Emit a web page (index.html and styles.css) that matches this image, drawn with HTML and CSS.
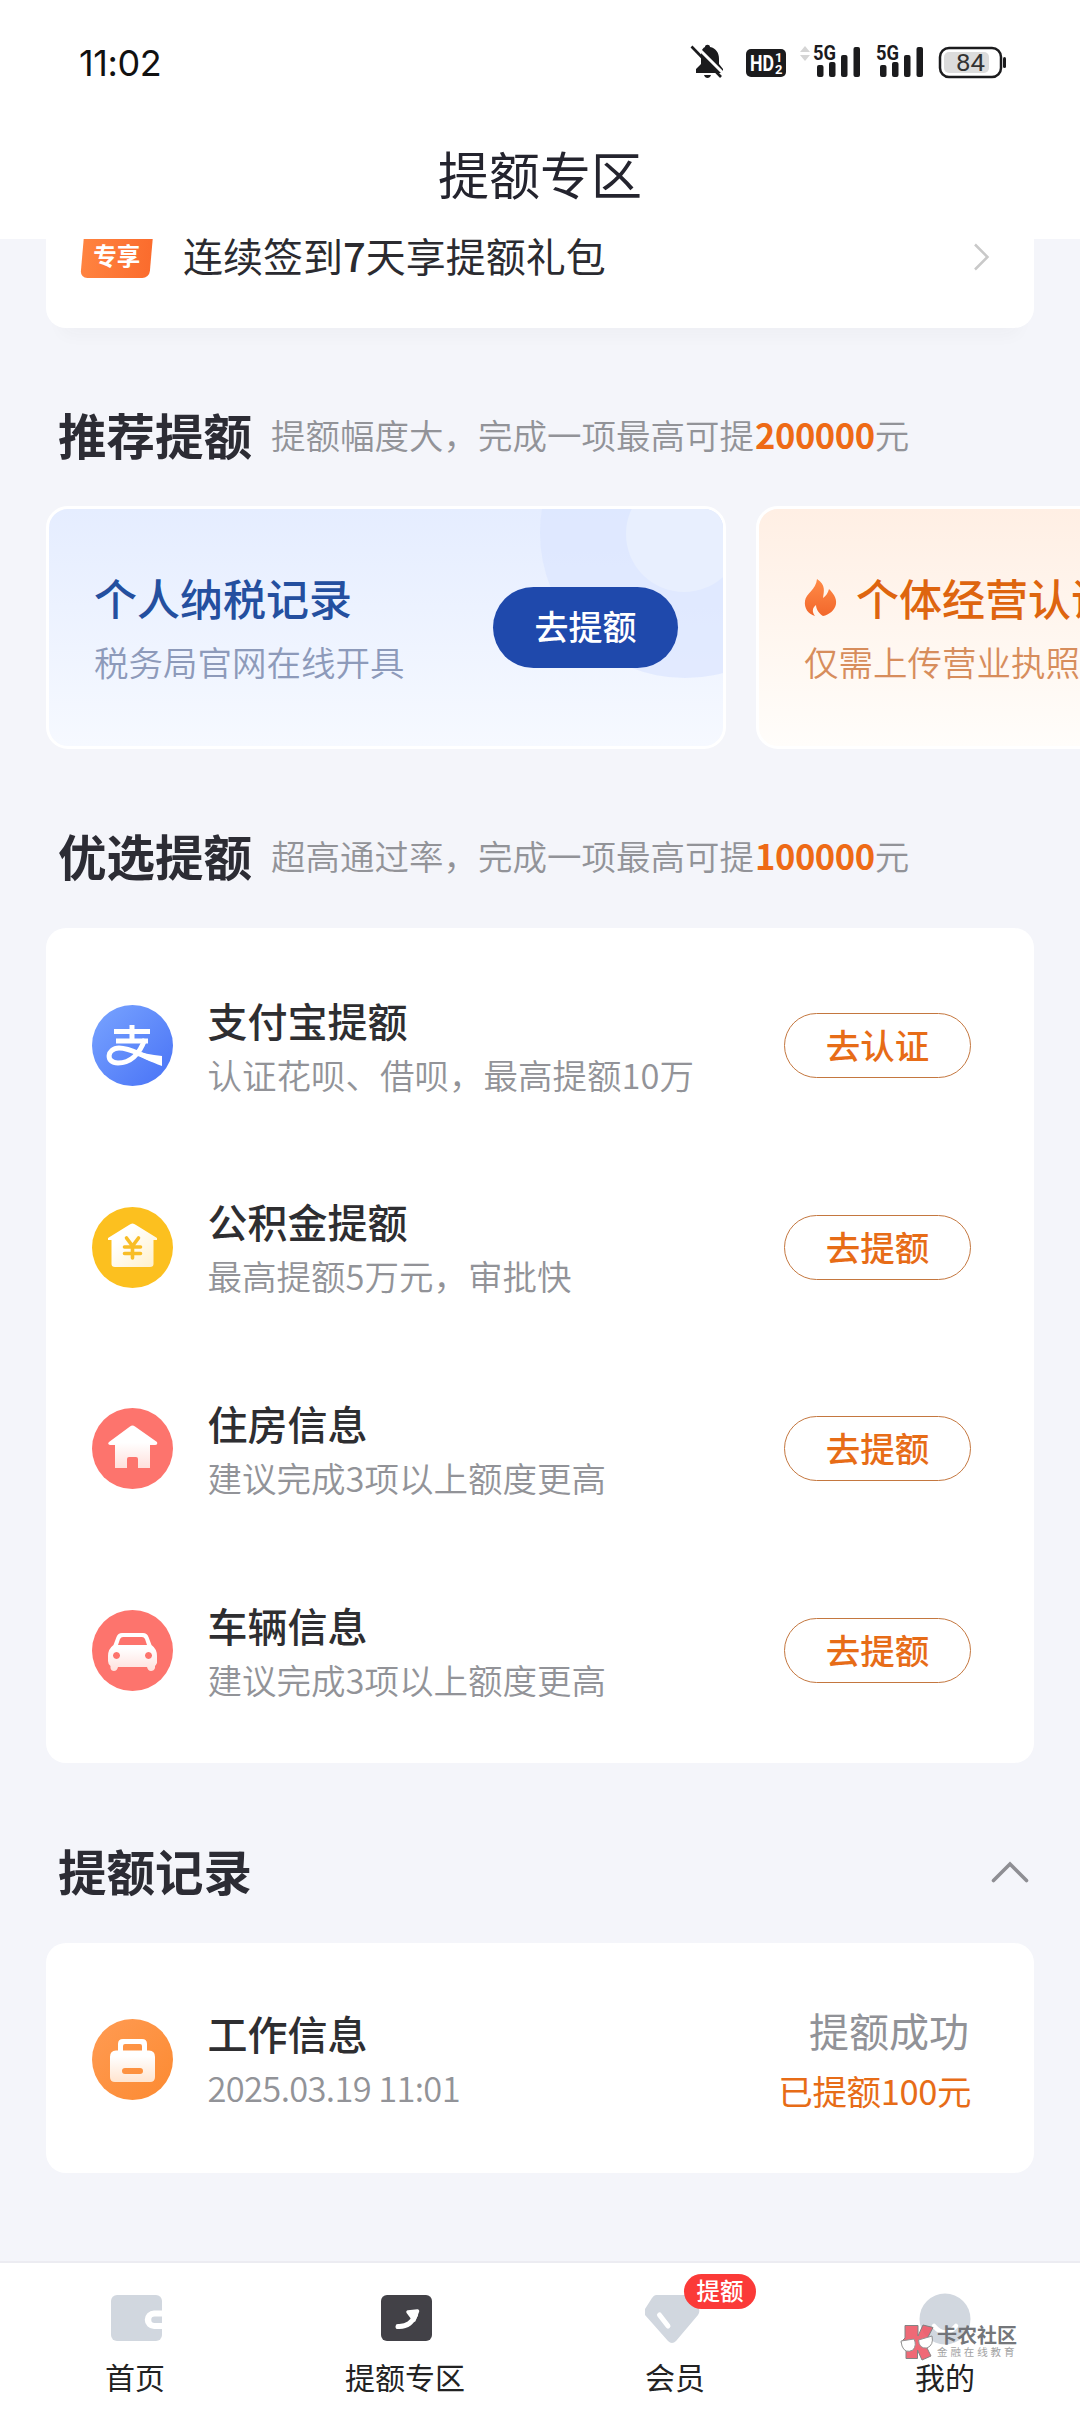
FILE: index.html
```html
<!DOCTYPE html>
<html lang="zh-CN">
<head>
<meta charset="utf-8">
<title>提额专区</title>
<link rel="stylesheet" href="styles.css">
</head>
<body>
<div class="screen">
  <header class="topbar">
    <div class="status">
      <span class="clock">11:02</span>
      <svg class="status-icons" width="330" height="50" viewBox="0 0 330 50">
        <g fill="#1b1b1d">
          <path d="M15 7c0-3 5-3 5 0c6 1 9 6 9 12v5l4 5v4H6v-4l5-5v-5c0-6 0-10 4-12zM14 35h7c-1 4-6 4-7 0z"/>
          <path d="M4 4L34 34" stroke="#fff" stroke-width="3"/><path d="M1.500 6.500L31 37" stroke="#1b1b1d" stroke-width="2.600"/>
          <rect x="56" y="9" width="40" height="28" rx="5"/>
          <rect x="127" y="25" width="6.500" height="12" rx="2"/><rect x="139" y="22" width="6.500" height="15" rx="2"/><rect x="151" y="15" width="6.500" height="22" rx="2"/><rect x="163.500" y="7" width="6.500" height="30" rx="2"/>
          <rect x="190" y="25" width="6.500" height="12" rx="2"/><rect x="202" y="22" width="6.500" height="15" rx="2"/><rect x="214" y="15" width="6.500" height="22" rx="2"/><rect x="226.500" y="7" width="6.500" height="30" rx="2"/>
          <rect x="313" y="17" width="3" height="11" rx="1.500"/>
        </g>
        <path d="M110 12l5-6l5 6zM110 15h10l-5 6z" fill="#d5d5d5"/>
        <rect x="250" y="8" width="61" height="29" rx="9" fill="#fff" stroke="#1b1b1d" stroke-width="2.500"/>
        <rect x="254" y="12" width="45" height="21" rx="5" fill="#dcdcdc"/>
        <g class="st-text">
          <text x="60" y="31" font-size="22" font-weight="700" fill="#fff" textLength="24" lengthAdjust="spacingAndGlyphs">HD</text>
          <text x="85" y="22" font-size="13" font-weight="700" fill="#fff">1</text>
          <text x="85" y="34" font-size="13" font-weight="700" fill="#fff">2</text>
          <text x="123" y="20" font-size="20" font-weight="700" fill="#1b1b1d" stroke="#fff" stroke-width="3" paint-order="stroke" textLength="23" lengthAdjust="spacingAndGlyphs">5G</text>
          <text x="186" y="20" font-size="20" font-weight="700" fill="#1b1b1d" stroke="#fff" stroke-width="3" paint-order="stroke" textLength="23" lengthAdjust="spacingAndGlyphs">5G</text>
          <text x="266" y="31" font-size="24" fill="#333" textLength="29" lengthAdjust="spacingAndGlyphs">84</text>
        </g>
      </svg>
    </div>
    <h1 class="page-title">提额专区</h1>
  </header>

  <main class="content">
    <section class="promo">
      <span class="promo-tag"><span>专享</span></span>
      <span class="promo-text">连续签到<b>7</b>天享提额礼包</span>
      <svg class="promo-arrow" width="20" height="30" viewBox="0 0 20 30"><path d="M3 2.500L15.500 15L3 27.500" fill="none" stroke="#c9c9c9" stroke-width="2.500"/></svg>
    </section>

    <div class="section-head">
      <h2>推荐提额</h2>
      <p>提额幅度大，完成一项最高可提<em>200000</em>元</p>
    </div>

    <div class="offers">
      <article class="offer blue">
        <svg class="offer-deco" width="200" height="180" viewBox="0 0 200 180">
          <circle cx="162" cy="24" r="145" fill="#dce5ff" opacity=".7"/>
          <circle cx="161" cy="25" r="58" fill="#e8effe"/>
        </svg>
        <div class="offer-text"><h3>个人纳税记录</h3><p>税务局官网在线开具</p></div>
        <button class="solid">去提额</button>
      </article>
      <article class="offer orange">
        <div class="offer-text">
          <h3><svg class="flame" width="34" height="40" viewBox="0 0 34 40"><defs><linearGradient id="fl" x1="0" y1="0" x2="0" y2="1"><stop offset="0" stop-color="#ff8b48"/><stop offset="1" stop-color="#f2672b"/></linearGradient></defs><path fill="url(#fl)" d="M13 1C22 7 20 13 19 20C22 18 24 15 25 11C29 15 33 20 32 26C31 32 25 37 19 38C16 36 12 32 12 27C8 30 8 34 11 38C4 36 0 30 1 23C2 15 12 12 13 1z"/></svg>个体经营认证</h3>
          <p>仅需上传营业执照</p>
        </div>
      </article>
    </div>

    <div class="section-head second">
      <h2>优选提额</h2>
      <p>超高通过率，完成一项最高可提<em>100000</em>元</p>
    </div>

    <section class="panel list">
      <div class="row">
        <svg class="row-icon" viewBox="0 0 81 81"><defs><linearGradient id="bl" x1="0" y1="0" x2="1" y2="1"><stop offset="0" stop-color="#79a4ff"/><stop offset="1" stop-color="#4872f6"/></linearGradient></defs><circle cx="40.500" cy="40.500" r="40.500" fill="url(#bl)"/>
          <path d="M22 26.500H58M24 36H56M40 20V36" fill="none" stroke="#fff" stroke-width="5"/><path d="M53 34C49 45 42 58 26 58C13 58 15 43 27 43C41 43 53 54 69 56" fill="none" stroke="#fff" stroke-width="5"/><path d="M42 45C50 48 59 50 70 51V61C59 57 48 52 41 47z" fill="#fff"/></svg>
        <div class="row-text"><h4>支付宝提额</h4><p>认证花呗、借呗，最高提额10万</p></div>
        <button class="ghost">去认证</button>
      </div>
      <div class="row">
        <svg class="row-icon" viewBox="0 0 81 81"><defs><linearGradient id="cr" x1="0" y1="0" x2="1" y2="1"><stop offset=".3" stop-color="#fff"/><stop offset="1" stop-color="#fff0c8"/></linearGradient></defs><circle cx="40.500" cy="40.500" r="40.500" fill="#fcc01f"/>
          <path d="M37 18Q40.500 15 44 18L65 31V33H61.500V57Q61.500 60 58 60H23Q19.500 60 19.500 57V33H16V31z" fill="url(#cr)"/><path d="M34.500 31L40.500 39L46.500 31M32.500 40H48.500M32.500 46.500H48.500M40.500 39V51" fill="none" stroke="#f8bd26" stroke-width="3.600" stroke-linecap="round"/></svg>
        <div class="row-text"><h4>公积金提额</h4><p>最高提额5万元，审批快</p></div>
        <button class="ghost">去提额</button>
      </div>
      <div class="row">
        <svg class="row-icon" viewBox="0 0 81 81"><defs><linearGradient id="pk" x1="0" y1="0" x2="0" y2="1"><stop offset=".4" stop-color="#fff"/><stop offset="1" stop-color="#ffe0dc"/></linearGradient></defs><circle cx="40.500" cy="40.500" r="40.500" fill="#fd746d"/>
          <path d="M38 18.500Q40.500 16.500 43 18.500L65 34Q66 37 63 37H58V60H46V51Q46 49 44 49H37Q35 49 35 51V60H23V37H18Q15 36 17 34z" fill="url(#pk)"/></svg>
        <div class="row-text"><h4>住房信息</h4><p>建议完成3项以上额度更高</p></div>
        <button class="ghost">去提额</button>
      </div>
      <div class="row">
        <svg class="row-icon" viewBox="0 0 81 81"><circle cx="40.500" cy="40.500" r="40.500" fill="#fd746d"/>
          <path fill-rule="evenodd" d="M30 23H51Q55 23 56.500 27L59.500 35Q65 39 65 46V53Q64 55 63 56V58Q62 61 59 61Q56 61 55 57H26Q25 61 22 61Q19 61 18.500 58V56Q16 54 16 51V46Q16 39 21.500 35L24.500 27Q26 23 30 23zM31 27Q29 27 28 29L26 35H55L53 29Q52 27 50 27zM24.500 42a3.500 3.500 0 1 0 .01 0zM56.500 42a3.500 3.500 0 1 0 .01 0z" fill="url(#pk)"/></svg>
        <div class="row-text"><h4>车辆信息</h4><p>建议完成3项以上额度更高</p></div>
        <button class="ghost">去提额</button>
      </div>
    </section>

    <div class="section-head third">
      <h2>提额记录</h2>
      <svg class="collapse" width="40" height="24" viewBox="0 0 40 24"><path d="M3.500 20.500L20 4L36.500 20.500" fill="none" stroke="#8e8e93" stroke-width="3.600" stroke-linecap="round"/></svg>
    </div>

    <section class="panel record">
      <div class="row">
        <svg class="row-icon" viewBox="0 0 81 81"><defs><linearGradient id="or" x1="0" y1="0" x2="1" y2="1"><stop offset="0" stop-color="#ff9b53"/><stop offset="1" stop-color="#fc8a31"/></linearGradient><linearGradient id="bg" x1="0" y1="0" x2="0" y2="1"><stop offset=".4" stop-color="#fff"/><stop offset="1" stop-color="#ffe4cf"/></linearGradient></defs><circle cx="40.500" cy="40.500" r="40.500" fill="url(#or)"/>
          <path fill-rule="evenodd" d="M31 20H50Q55 20 55 25V31.500H57Q63 31.500 63 38V58Q63 63 58 63H23Q18 63 18 58V38Q18 31.500 24 31.500H26V25Q26 20 31 20zM33 25Q31 25 31 27V31.500H50V27Q50 25 48 25zM33 49Q30 49 30 52Q30 55 33 55H48Q51 55 51 52Q51 49 48 49z" fill="url(#bg)"/></svg>
        <div class="row-text"><h4>工作信息</h4><p class="date">2025.03.19 11:01</p></div>
        <div class="result"><span class="ok">提额成功</span><span class="sum">已提额100元</span></div>
      </div>
    </section>
  </main>

  <nav class="tabs">
    <a class="tab"><svg width="60" height="54" viewBox="0 0 60 54"><rect x="6" y="4" width="51" height="46" rx="6" fill="#d1d7df"/><path d="M57 19.500H49a9.200 9.200 0 0 0 0 18.500H57V32H49.500a3 3 0 0 1 0-6.500H57z" fill="#fff"/></svg><span>首页</span></a>
    <a class="tab"><svg width="60" height="54" viewBox="0 0 60 54"><rect x="6" y="4" width="51" height="46" rx="6" fill="#424147"/><path d="M23 35.500C33 36 37 31 40.500 24" fill="none" stroke="#fff" stroke-width="5" stroke-linecap="round"/><path d="M33 21L42.500 20L39 29z" fill="#fff" stroke="#fff" stroke-width="3.500" stroke-linejoin="round"/></svg><span>提额专区</span></a>
    <a class="tab"><svg width="60" height="54" viewBox="3 0 60 54"><path d="M14 4H46Q49 4 51 7L57 18Q58 21 56 24L34 50Q30 54 26 50L3 24Q1 21 3 18L10 7Q12 4 14 4z" fill="#d1d7df"/><path d="M17.500 24L26 35" stroke="#fff" stroke-width="5" stroke-linecap="round"/></svg><i class="badge">提额</i><span>会员</span></a>
    <a class="tab"><svg width="60" height="54" viewBox="0 0 60 54"><circle cx="30" cy="28" r="25.500" fill="#d1d7df"/><path d="M19 35Q30 48 41 35" fill="none" stroke="#fff" stroke-width="4.500" stroke-linecap="round"/></svg><span>我的</span>
      <div class="mark">
        <svg width="34" height="37" viewBox="0 0 34 37"><path d="M5 1.500H18V12L23 1L33 3.500L28 13L27 24L31 32L22 36L17.500 26V34.500H6V25L1 18L5 14z" fill="#ee5968" stroke="#777" stroke-width="1"/><path d="M1 17L14 15Q17 21 13 26Q5 30 2 22zM18.500 16L32 12Q34 21 27 24Q19 25 18.500 16z" fill="#fff" stroke="#888"/></svg>
        <div><b>卡农社区</b><small>金融在线教育</small></div>
      </div>
    </a>
  </nav>
</div>
</body>
</html>
```
FILE: styles.css
```css
* { box-sizing: border-box; margin: 0; padding: 0; }
body { width: 1080px; background: #f4f6fb; font-family: "Noto Sans CJK SC", sans-serif; color: #2b2b30; }
.screen { width: 1080px; height: 2412px; display: flex; flex-direction: column; overflow: hidden; background: #f4f5fa; white-space: nowrap; }
.topbar { height: 239px; flex: none; background: #fff; }
.status { height: 122px; display: flex; align-items: center; justify-content: space-between; padding: 2px 60px 0 79px; }
.clock { font: 400 36px/50px "Inter", sans-serif; letter-spacing: -.4px; color: #111; margin-top: 1px; }
.status-icons { margin-top: 5px; flex: none; }
.st-text { font-family: "Roboto", sans-serif; }
.page-title { height: 102px; line-height: 102px; text-align: center; font-size: 51px; font-weight: 400; color: #24242e; }

.content { flex: 1; min-height: 0; }
.promo { height: 89px; margin: 0 46px; padding: 0 42px 50px 36px; background: #fff; border-radius: 0 0 20px 20px; display: flex; align-items: center; box-shadow: 0 22px 18px -16px rgba(60, 50, 60, .035); }
.promo-tag { width: 69px; height: 39px; margin-right: 32px; background: linear-gradient(90deg, #ff8340, #fb6c2d); transform: skewX(-5deg); border-radius: 0 0 7px 7px; color: #fff; font-size: 23.500px; font-weight: 700; line-height: 32px; text-align: center; }
.promo-tag span { display: block; transform: skewX(5deg); }
.promo-text { flex: 1; font-size: 40px; line-height: 40px; padding-bottom: 7px; }
.promo-text b { font-weight: 500; }
.promo-arrow { margin-top: -3px; }

.section-head { display: flex; align-items: center; height: 60px; margin: 76px 46px 42px; padding: 0 6px 0 12px; }
.section-head h2 { font-size: 48.500px; font-weight: 700; line-height: 60px; width: 213px; color: #2c2c34; }
.section-head p { font-size: 34.500px; line-height: 60px; font-weight: 350; color: #929398; }
.section-head em { font-style: normal; font-weight: 700; color: #ee6a16; letter-spacing: -.4px; margin-left: 1px; }
.section-head.second { margin: 76px 46px 43px; }
.section-head.third { margin: 77px 46px 43px; padding-right: 4px; justify-content: space-between; }
.collapse { margin-top: 3px; }

.offers { display: flex; gap: 30px; margin-left: 46px; overflow: hidden; }
.offer { position: relative; flex: none; width: 680px; height: 243px; border: 3px solid #fff; border-radius: 22px; display: flex; align-items: center; justify-content: space-between; padding: 0 45px 0 45px; overflow: hidden; }
.offer.blue { background: linear-gradient(#e5edff, #f6f9ff); }
.offer.orange { background: linear-gradient(#ffefe4, #fffdfa); }
.offer-deco { position: absolute; right: 0; top: 0; }
.offer-text { position: relative; padding-top: 2px; }
.offer h3 { display: flex; align-items: center; font-size: 43px; line-height: 64px; font-weight: 500; color: #244f9f; }
.offer p { font-size: 34.500px; line-height: 64px; font-weight: 350; color: #8d9aba; }
.offer.orange h3 { color: #de650f; }
.offer.orange p { color: #d78d5c; }
.flame { margin-right: 18px; margin-top: 2px; }
.solid { position: relative; width: 185px; height: 81px; border: 0; border-radius: 41px; background: #1f49ac; color: #fff; font: 500 34px/76px "Noto Sans CJK SC", sans-serif; padding-bottom: 4px; }

.panel { margin: 0 46px; background: #fff; border-radius: 20px; }
.list { height: 835px; padding-top: 17px; }
.row { height: 201.600px; display: flex; align-items: center; padding: 0 63px 0 46px; }
.row-icon { width: 81px; height: 81px; margin-right: 34.500px; flex: none; }
.row-text { flex: 1; padding-top: 2px; }
.row h4 { font-size: 40px; line-height: 54px; font-weight: 500; color: #2e2e31; }
.row p { font-size: 34.500px; line-height: 54px; font-weight: 350; color: #929398; }
.row .date { letter-spacing: -.65px; }
.ghost { width: 187px; height: 65px; border: 1.500px solid #c4773f; border-radius: 33px; background: #fff; color: #e76c17; font: 500 34.500px/60px "Noto Sans CJK SC", sans-serif; padding-bottom: 5px; }
.record { height: 230px; padding-top: 16px; }
.record .row-text { padding-top: 1px; }
.result { display: flex; flex-direction: column; align-items: flex-end; }
.ok { font-size: 40px; line-height: 60px; color: #919297; margin-right: 2px; }
.sum { font-size: 34.500px; line-height: 60px; color: #e76c17; letter-spacing: -.4px; }

.tabs { flex: none; height: 151px; background: #fff; border-top: 2px solid #ececf2; display: flex; position: relative; }
.tab { position: relative; flex: 1; display: flex; flex-direction: column; align-items: center; padding-top: 28px; }
.tab > span { font-size: 30px; line-height: 44px; color: #222; margin-top: 9px; }
.badge { position: absolute; left: 144px; top: 11px; width: 72px; height: 35px; border-radius: 18px; background: #fb3a38; color: #fff; font: 500 23.500px/32px "Noto Sans CJK SC", sans-serif; text-align: center; }
.mark { position: absolute; left: 90px; top: 61px; display: flex; gap: 3px; opacity: .9; }
.mark b { display: block; font-size: 20px; line-height: 22px; color: #66686c; font-weight: 700; }
.mark small { display: block; font-size: 10.500px; line-height: 12px; letter-spacing: 2.900px; color: #999; }
```
